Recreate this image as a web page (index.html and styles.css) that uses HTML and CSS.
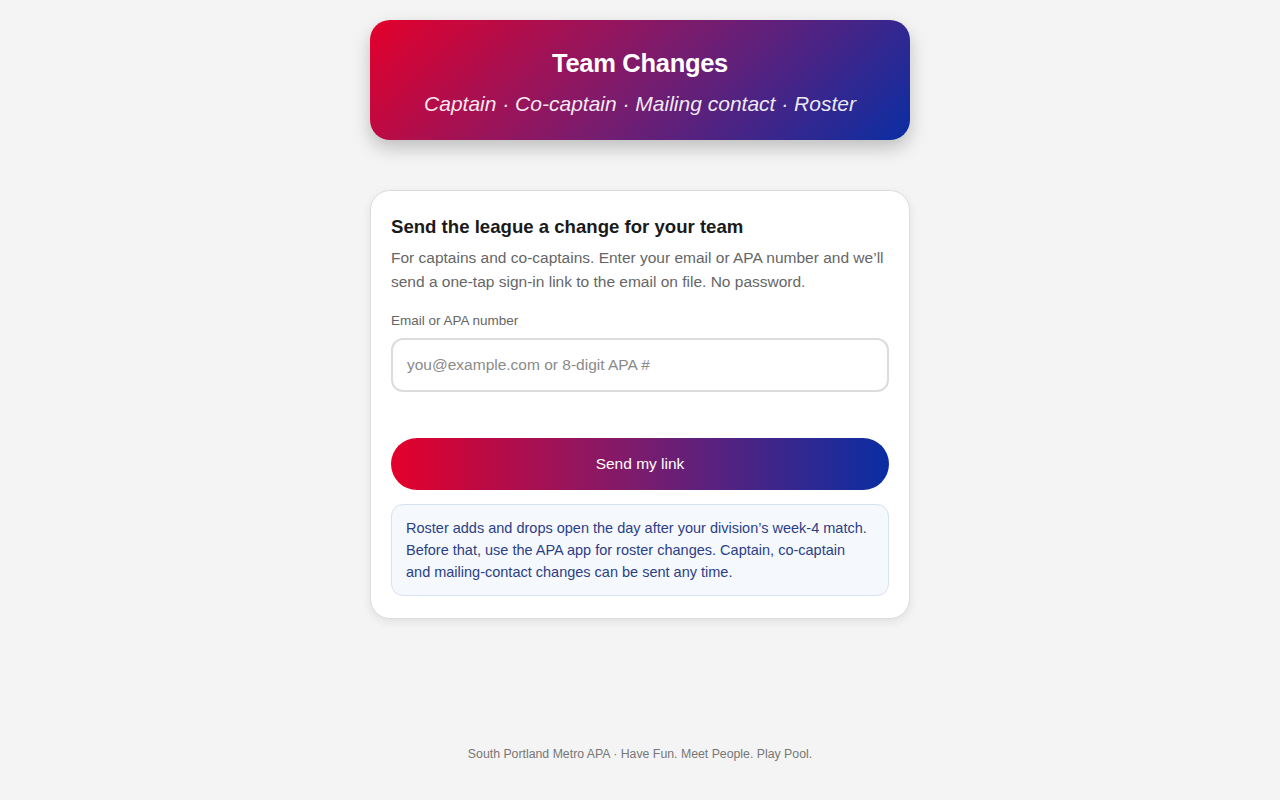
FILE: index.html
```html
<!DOCTYPE html>
<html lang="en">
<head>
<meta charset="utf-8">
<title>Team Changes</title>
<link rel="stylesheet" href="styles.css">
</head>
<body>
<main class="page">
  <header class="hero">
    <h1 class="hero-title">Team Changes</h1>
    <p class="hero-sub">Captain · Co-captain · Mailing contact · Roster</p>
  </header>

  <section class="card">
    <h2 class="card-title">Send the league a change for your team</h2>
    <p class="card-lead">For captains and co-captains. Enter your email or APA number and we’ll send a one-tap sign-in link to the email on file. No password.</p>
    <form class="form">
      <label class="field-label" for="ident">Email or APA number</label>
      <input class="field-input" id="ident" type="text" placeholder="you@example.com or 8-digit APA #">
      <button class="btn" type="button">Send my link</button>
    </form>
    <div class="note">Roster adds and drops open the day after your division’s week-4 match. Before that, use the APA app for roster changes. Captain, co-captain and mailing-contact changes can be sent any time.</div>
  </section>
</main>
<footer class="footer">South Portland Metro APA · Have Fun. Meet People. Play Pool.</footer>
</body>
</html>
```

FILE: styles.css
```css
* { box-sizing: border-box; }
html, body { margin: 0; padding: 0; }
body {
  background: #f4f4f4;
  font-family: "Liberation Sans", Arial, sans-serif;
  color: #1a1a1a;
  min-height: 800px;
  display: flex;
  flex-direction: column;
  align-items: center;
}
.page {
  width: 540px;
  padding-top: 20px;
  display: flex;
  flex-direction: column;
}
.hero {
  height: 120px;
  border-radius: 20px;
  background: linear-gradient(135deg, #e4002b 0%, #7a1c6e 50%, #0a2ea3 100%);
  box-shadow: 0 8px 18px rgba(0,0,0,0.22);
  color: #fff;
  text-align: center;
  padding-top: 26px;
}
.hero-title {
  margin: 0;
  font-size: 25.5px;
  line-height: 34px;
  font-weight: 700;
  letter-spacing: -0.3px;
}
.hero-sub {
  margin: 11px 0 0;
  font-size: 21px;
  line-height: 26px;
  font-style: italic;
  color: rgba(255,255,255,0.92);
}
.card {
  margin-top: 50px;
  background: #fff;
  border: 1px solid #dcdcdc;
  border-radius: 20px;
  box-shadow: 0 3px 10px rgba(0,0,0,0.08);
  padding: 23px 20px 22px;
}
.card-title {
  margin: 0;
  font-size: 18.6px;
  line-height: 26px;
  font-weight: 700;
  color: #1a1a1a;
}
.card-lead {
  margin: 6px 0 0;
  font-size: 15.5px;
  line-height: 24px;
  color: #666;
}
.form {
  display: flex;
  flex-direction: column;
  margin-top: 18px;
}
.field-label {
  font-size: 13.5px;
  line-height: 18px;
  color: #666;
}
.field-input {
  margin-top: 8px;
  height: 54px;
  border: 2px solid #dcdcdc;
  border-radius: 12px;
  padding: 0 14px;
  font-family: inherit;
  font-size: 15.5px;
  color: #333;
  background: #fff;
  outline: none;
}
.field-input::placeholder { color: #8a8a8a; }
.btn {
  margin-top: 46px;
  height: 52px;
  border: 0;
  border-radius: 26px;
  background: linear-gradient(90deg, #e4002b 0%, #7a1c6e 50%, #0a2ea3 100%);
  color: #fff;
  font-family: inherit;
  font-size: 15.5px;
}
.note {
  margin-top: 14px;
  background: #f5f8fd;
  border: 1px solid #d8e1f0;
  border-radius: 12px;
  padding: 12px 18px 12px 14px;
  font-size: 14.5px;
  line-height: 22px;
  color: #2b3f86;
}
.footer {
  margin-top: auto;
  padding-bottom: 39px;
  font-size: 12.3px;
  color: #777;
}
```
